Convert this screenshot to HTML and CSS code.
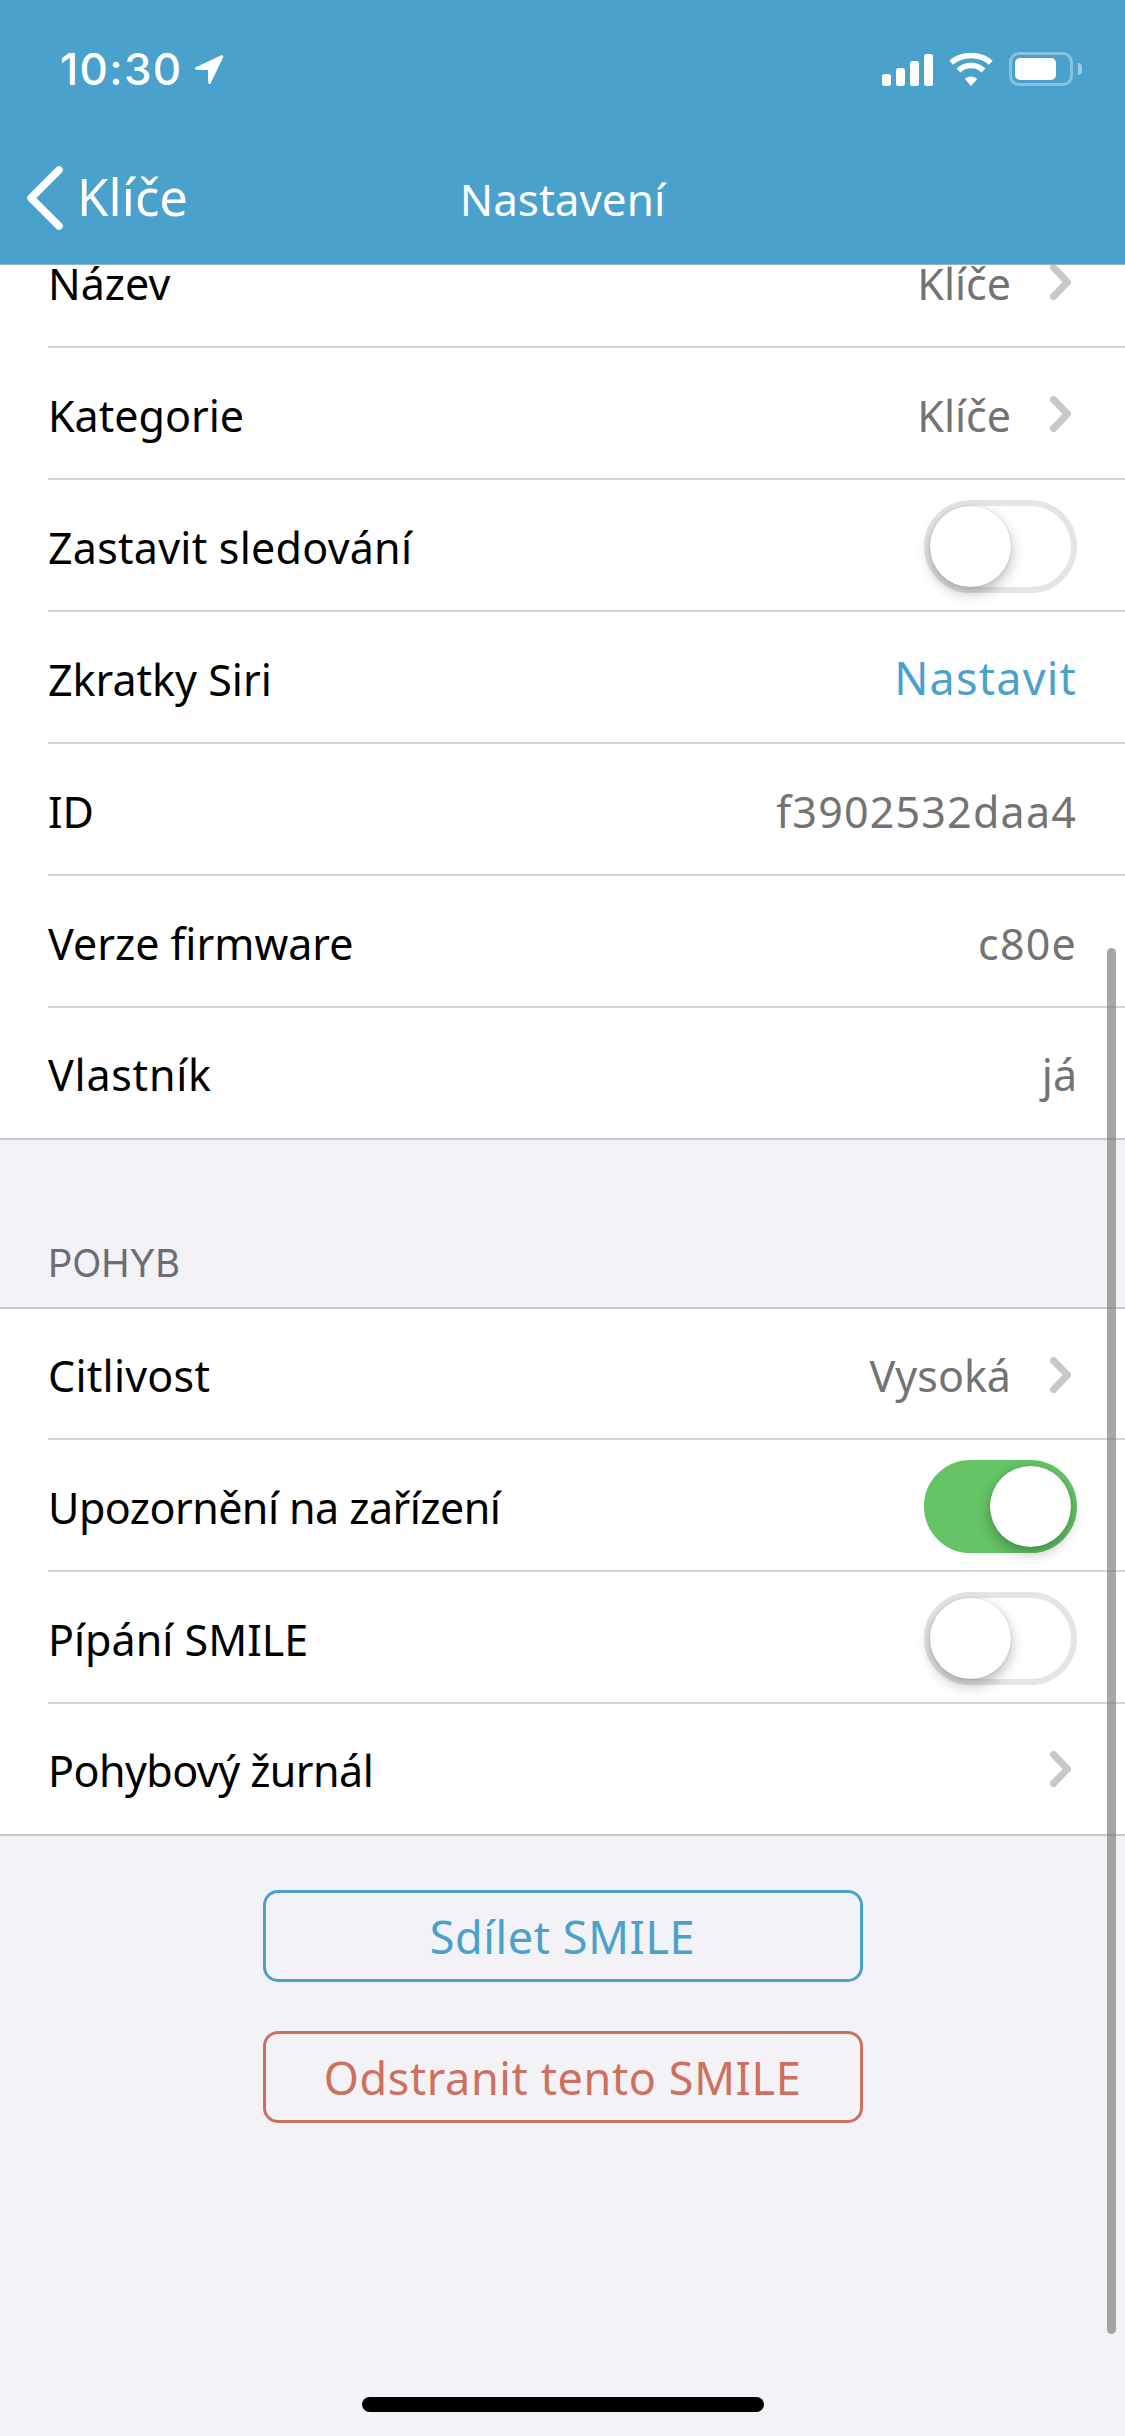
FILE: index.html
```html
<!DOCTYPE html>
<html lang="cs">
<head>
<meta charset="utf-8">
<title>Nastavení</title>
<link rel="stylesheet" href="styles.css">
</head>
<body>
<div class="phone">
  <header class="header">
    <div class="status">
      <div class="status-left">
        <span class="time">10:30</span>
        <svg class="loc" viewBox="0 0 30 31"><path d="M27.300 1.300 1.800 13.200c-1.400.7-1 2.500.6 2.500L14 15.900l.2 12.700c0 1.700 2 2 2.500.6L29.300 3.100c.5-1.300-.8-2.400-2-1.800z" fill="#fff"/></svg>
      </div>
      <div class="status-right">
        <svg class="signal" viewBox="0 0 51 32"><rect x="0" y="20" width="9" height="12" rx="2.500" fill="#fff"/><rect x="14" y="14" width="9" height="18" rx="2.500" fill="#fff"/><rect x="28" y="7" width="9" height="25" rx="2.500" fill="#fff"/><rect x="42" y="0" width="9" height="32" rx="2.500" fill="#fff"/></svg>
        <svg class="wifi" viewBox="0 0 44 33"><path d="M22 23.500c2.400 0 4.600.9 6.200 2.400L22 33l-6.200-7.100c1.600-1.500 3.800-2.400 6.200-2.400z" fill="#fff"/><path d="M9.500 17.500C12.700 14.300 17.100 12.400 22 12.400s9.300 1.900 12.500 5.100" fill="none" stroke="#fff" stroke-width="5.500"/><path d="M2.200 9.800C7.300 5 14.300 2.500 22 2.500s14.700 2.500 19.800 7.300" fill="none" stroke="#fff" stroke-width="5.500"/></svg>
        <div class="battery"><div class="battery-level"></div></div>
        <div class="battery-cap"></div>
      </div>
    </div>
    <div class="nav">
      <div class="back">
        <svg class="back-icon" viewBox="0 0 36 64"><path d="M32 4 4 32l28 28" fill="none" stroke="#fff" stroke-width="7.500" stroke-linecap="round" stroke-linejoin="round"/></svg>
        <span class="back-label">Klíče</span>
      </div>
      <span class="nav-title">Nastavení</span>
    </div>
  </header>

  <main class="content">
    <section class="group group-first">
      <div class="row"><span class="label">Název</span><span class="value">Klíče</span><svg class="chevron" viewBox="0 0 21 36"><path d="M3.500 3.500 17.500 18l-14 14.500" fill="none" stroke="#c7c7cc" stroke-width="7" stroke-linecap="round" stroke-linejoin="round"/></svg></div>
      <div class="row"><span class="label">Kategorie</span><span class="value">Klíče</span><svg class="chevron" viewBox="0 0 21 36"><path d="M3.500 3.500 17.500 18l-14 14.500" fill="none" stroke="#c7c7cc" stroke-width="7" stroke-linecap="round" stroke-linejoin="round"/></svg></div>
      <div class="row"><span class="label label-loose">Zastavit sledování</span><div class="toggle"><div class="knob"></div></div></div>
      <div class="row"><span class="label">Zkratky Siri</span><span class="value value-link">Nastavit</span></div>
      <div class="row"><span class="label">ID</span><span class="value value-code">f3902532daa4</span></div>
      <div class="row"><span class="label">Verze firmware</span><span class="value value-code">c80e</span></div>
      <div class="row"><span class="label label-wide">Vlastník</span><span class="value">já</span></div>
    </section>

    <h2 class="section-title">POHYB</h2>

    <section class="group group-motion">
      <div class="row"><span class="label label-loose">Citlivost</span><span class="value">Vysoká</span><svg class="chevron" viewBox="0 0 21 36"><path d="M3.500 3.500 17.500 18l-14 14.500" fill="none" stroke="#c7c7cc" stroke-width="7" stroke-linecap="round" stroke-linejoin="round"/></svg></div>
      <div class="row"><span class="label label-tight">Upozornění na zařízení</span><div class="toggle toggle-on"><div class="knob"></div></div></div>
      <div class="row"><span class="label">Pípání SMILE</span><div class="toggle"><div class="knob"></div></div></div>
      <div class="row"><span class="label label-tight">Pohybový žurnál</span><svg class="chevron" viewBox="0 0 21 36"><path d="M3.500 3.500 17.500 18l-14 14.500" fill="none" stroke="#c7c7cc" stroke-width="7" stroke-linecap="round" stroke-linejoin="round"/></svg></div>
    </section>

    <div class="actions">
      <button class="btn btn-share">Sdílet SMILE</button>
      <button class="btn btn-remove">Odstranit tento SMILE</button>
    </div>
  </main>

  <div class="scrollbar"></div>
  <div class="home-indicator"></div>
</div>
</body>
</html>
```
FILE: styles.css
```css
* { box-sizing: border-box; }
html, body { margin: 0; padding: 0; }
body { width: 1125px; height: 2436px; overflow: hidden; font-family: "Noto Sans", sans-serif; background: #f2f2f7; }
.phone { position: relative; width: 1125px; height: 2436px; display: flex; flex-direction: column; overflow: hidden; }

.header { position: relative; z-index: 2; flex: none; height: 265px; background: #4aa1cc; border-bottom: 1px solid #8fb4c8; color: #fff; }
.status { height: 138px; display: flex; justify-content: space-between; align-items: flex-start; padding: 52px 43px 0 60px; }
.status-left { display: flex; align-items: center; gap: 11px; height: 34px; }
.time { font-family: Inter, sans-serif; font-weight: 500; font-size: 44px; line-height: 34px; letter-spacing: 1.3px; }
.loc { width: 30px; height: 31px; }
.status-right { display: flex; align-items: center; height: 34px; }
.signal { width: 51px; height: 32px; margin-right: 16px; margin-top: 2px; }
.wifi { width: 44px; height: 33px; margin-right: 16px; }
.battery { width: 64px; height: 34px; border: 3px solid rgba(255,255,255,.35); border-radius: 10px; padding: 3px; }
.battery-level { width: 41px; height: 22px; background: #fff; border-radius: 5px; }
.battery-cap { width: 4px; height: 12px; margin-left: 5px; background: rgba(255,255,255,.45); border-radius: 0 4px 4px 0; }

.nav { position: relative; height: 126px; }
.back { display: flex; align-items: center; padding: 28px 0 0 27px; gap: 14px; }
.back-icon { width: 36px; height: 64px; }
.back-label { font-size: 51px; line-height: 60px; padding-bottom: 4px; }
.nav-title { position: absolute; left: 0; right: 0; top: 33px; text-align: center; font-size: 44px; line-height: 56px; }

.content { flex: 1; min-height: 0; overflow: hidden; }
.group { background: #fff; border-top: 2px solid #c8c7cc; border-bottom: 2px solid #c8c7cc; }
.group-first { margin-top: -49px; border-top: 0; }
.row { position: relative; height: 132px; display: flex; align-items: center; padding: 0 48px; color: #000; }
.row:last-child { height: 130px; }
.group-motion .row:first-child { height: 131px; }
.row + .row::before { content: ""; position: absolute; left: 48px; right: 0; top: -2px; height: 2px; background: #d4d3d7; }
.label { flex: 1; font-size: 43px; line-height: 56px; padding-top: 3px; }
.label-tight { letter-spacing: -.55px; }
.label-loose { letter-spacing: .25px; }
.label-wide { letter-spacing: .75px; }
.value { font-size: 43px; line-height: 56px; padding-top: 3px; color: #737373; }
.value-code { letter-spacing: 1.2px; }
.value-link { font-size: 45px; letter-spacing: 1.2px; padding-top: 0; color: #4aa1cc; }
.chevron { width: 21px; height: 36px; margin-left: 39px; margin-right: 6px; flex: none; }

.toggle { position: relative; width: 153px; height: 93px; border: 6px solid #e5e5e5; border-radius: 47px; background: #fff; }
.knob { width: 81px; height: 81px; border-radius: 50%; background: #fff; box-shadow: 0 6px 14px rgba(0,0,0,.28), 0 0 2px rgba(0,0,0,.18); }
.toggle-on { background: #64c466; border-color: #64c466; display: flex; justify-content: flex-end; }

.section-title { margin: 0; height: 167px; padding: 100px 48px 0; font-family: Inter, sans-serif; font-weight: 400; font-size: 38px; line-height: 46px; color: #6d6d72; }

.actions { display: flex; flex-direction: column; align-items: center; gap: 49px; padding-top: 54px; }
.btn { width: 600px; height: 92px; background: transparent; border: 3px solid; border-radius: 15px; font-family: inherit; font-size: 45px; letter-spacing: .6px; padding: 0; }
.btn-share { color: #4aa1cc; border-color: #4aa1cc; }
.btn-remove { color: #cf6f5e; border-color: #cf6f5e; }

.scrollbar { position: absolute; left: 1107px; top: 948px; width: 9px; height: 1386px; background: rgba(120,120,120,.65); border-radius: 5px; }
.home-indicator { position: absolute; left: 362px; top: 2397px; width: 402px; height: 15px; background: #000; border-radius: 8px; }
```
